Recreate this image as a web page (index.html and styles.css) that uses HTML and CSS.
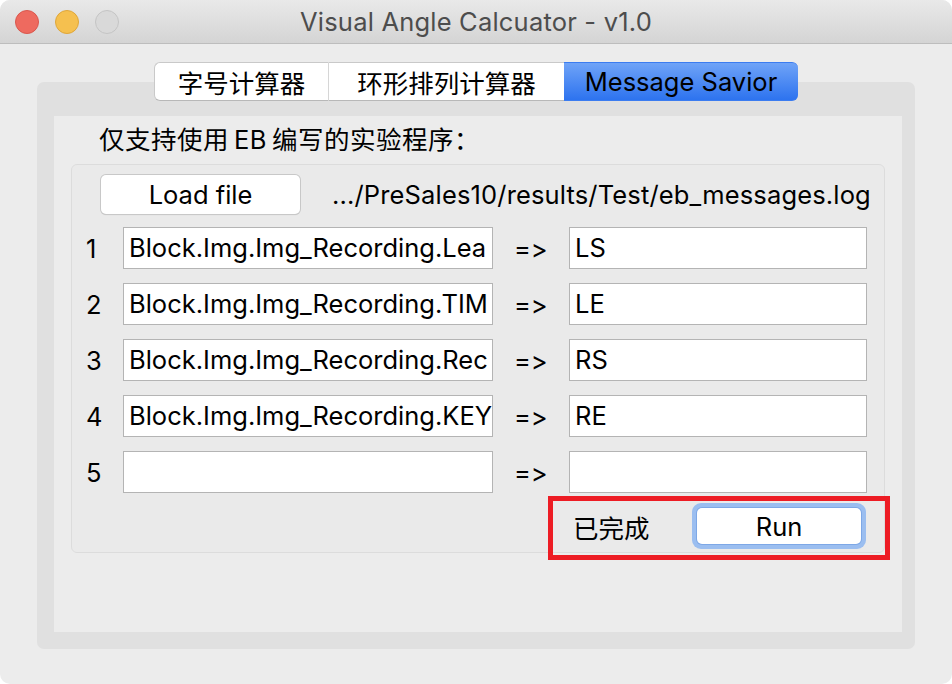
FILE: index.html
```html
<!DOCTYPE html>
<html>
<head>
<meta charset="utf-8">
<link rel="stylesheet" href="styles.css">
</head>
<body>
<div class="window">
  <div class="titlebar">
    <div class="lights">
      <span class="light red"></span>
      <span class="light yellow"></span>
      <span class="light gray"></span>
    </div>
    <div class="title">Visual Angle Calcuator - v1.0</div>
    <div></div>
  </div>
  <div class="content">
    <div class="tabs">
      <div class="tab t1">字号计算器</div>
      <div class="tab t2">环形排列计算器</div>
      <div class="tab t3 active">Message Savior</div>
    </div>
    <div class="frame">
      <div class="panel">
        <div class="hint">仅支持使用<span class="latin">EB</span>编写的实验程序：</div>
        <div class="group">
          <div class="loadrow">
            <button class="btn load">Load file</button>
            <span class="path">.../PreSales10/results/Test/eb_messages.log</span>
          </div>
          <div class="grid">
            <span class="num">1</span><div class="field left">Block.Img.Img_Recording.Lea</div><span class="arrow">=&gt;</span><div class="field">LS</div>
            <span class="num">2</span><div class="field left">Block.Img.Img_Recording.TIM</div><span class="arrow">=&gt;</span><div class="field">LE</div>
            <span class="num">3</span><div class="field left">Block.Img.Img_Recording.Rec</div><span class="arrow">=&gt;</span><div class="field">RS</div>
            <span class="num">4</span><div class="field left">Block.Img.Img_Recording.KEY</div><span class="arrow">=&gt;</span><div class="field">RE</div>
            <span class="num">5</span><div class="field left"></div><span class="arrow">=&gt;</span><div class="field"></div>
            <div class="runrow">
              <span class="status">已完成</span>
              <div class="ring"><button class="btn run">Run</button></div>
              <div class="mark"></div>
            </div>
          </div>
        </div>
      </div>
    </div>
  </div>
</div>
</body>
</html>
```
FILE: styles.css
```css
* { box-sizing: border-box; }
html, body { margin: 0; padding: 0; background: #ffffff; }
body {
  font-family: Inter, "Noto Sans CJK SC", sans-serif;
  font-feature-settings: "calt" 0, "liga" 0;
  font-variant-ligatures: none;
  color: #000;
}
.window {
  width: 952px;
  height: 684px;
  background: #ececec;
  border-radius: 10px;
  overflow: hidden;
  display: flex;
  flex-direction: column;
}
.titlebar {
  height: 44px;
  flex: none;
  background: linear-gradient(#e9e9e9, #d4d4d4);
  border-bottom: 1px solid #bdbdbd;
  display: grid;
  grid-template-columns: 1fr auto 1fr;
  align-items: center;
}
.lights { display: flex; gap: 16px; padding-left: 15px; }
.light { width: 24px; height: 24px; border-radius: 50%; display: block; }
.red { background: #ee6a5f; border: 1px solid #d9574d; }
.yellow { background: #f5c04f; border: 1px solid #dea63a; }
.gray { background: #d9d9d9; border: 1px solid #c4c4c4; }
.title { font-size: 25.5px; color: #4d4d4d; letter-spacing: 0.2px; }
.content {
  flex: 1;
  padding: 18px 37px 35px;
  display: flex;
  flex-direction: column;
}
.tabs {
  display: flex;
  justify-content: center;
  height: 39px;
  position: relative;
  z-index: 1;
}
.tab {
  height: 39px;
  display: flex;
  align-items: center;
  justify-content: center;
  font-size: 25.5px;
  background: #fff;
  border-top: 1px solid #c9c9c9;
  border-bottom: 1px solid #b8b8b8;
}
.t1 { width: 175px; border-left: 1px solid #c9c9c9; border-right: 1px solid #d6d6d6; border-radius: 6px 0 0 6px; }
.t2 { width: 235px; }
.t3 { width: 234px; border-radius: 0 6px 6px 0; }
.tab.active {
  background: linear-gradient(#6fa3f7, #2d73ef);
  border-color: #3b7cf0;
}
.frame {
  flex: 1;
  margin-top: -19px;
  background: #e0e0e0;
  border-radius: 7px;
  padding: 34px 17px 17px;
  display: flex;
}
.panel {
  flex: 1;
  background: #ececec;
  padding: 6px 17px 0;
}
.hint {
  font-size: 25.5px;
  line-height: 36px;
  padding-left: 28px;
  height: 42px;
  letter-spacing: 0.5px;
}
.latin { margin: 0 5px; }
.group {
  border: 1px solid #dcdcdc;
  border-radius: 6px;
  background: #eaeaea;
  padding: 10px 13px 3px;
}
.loadrow {
  display: flex;
  align-items: center;
  padding-left: 16px;
  gap: 32px;
}
.btn {
  font-family: Inter, "Noto Sans CJK SC", sans-serif;
  font-size: 25.5px;
  color: #000;
  background: #fff;
  border: none;
  border-radius: 5px;
  box-shadow: 0 0 0 1px #c8c8c8, 0 1px 1px rgba(0,0,0,0.18);
  padding: 0;
}
.load { width: 199px; height: 39px; }
.path { font-size: 25.5px; white-space: nowrap; letter-spacing: 0.15px; }
.grid {
  margin-top: 13px;
  display: grid;
  grid-template-columns: 38px 370px 76px 298px;
  grid-auto-rows: 42px;
  row-gap: 14px;
  align-items: center;
}
.num { font-size: 25.5px; padding-left: 1px; }
.arrow { font-size: 25.5px; padding-left: 21px; }
.field {
  height: 42px;
  background: #fff;
  border: 1px solid #b4b4b4;
  font-size: 25.5px;
  line-height: 40px;
  padding-left: 5px;
  white-space: nowrap;
  overflow: hidden;
}
.runrow {
  grid-column: 4;
  margin-top: -4px;
  height: 46px;
  display: flex;
  align-items: center;
  justify-content: space-between;
  padding-left: 4px;
  position: relative;
}
.status { font-size: 25.5px; }
.ring {
  width: 174px;
  height: 46px;
  border-radius: 9px;
  background: #9bbef0;
  padding: 5px;
  margin-right: 1px;
}
.run {
  width: 164px;
  height: 36px;
  box-shadow: 0 0 0 1px #7ea8e6;
}
.mark {
  position: absolute;
  left: -21px;
  top: -7px;
  width: 342px;
  height: 64px;
  border: 5px solid #ed1c24;
}
```
